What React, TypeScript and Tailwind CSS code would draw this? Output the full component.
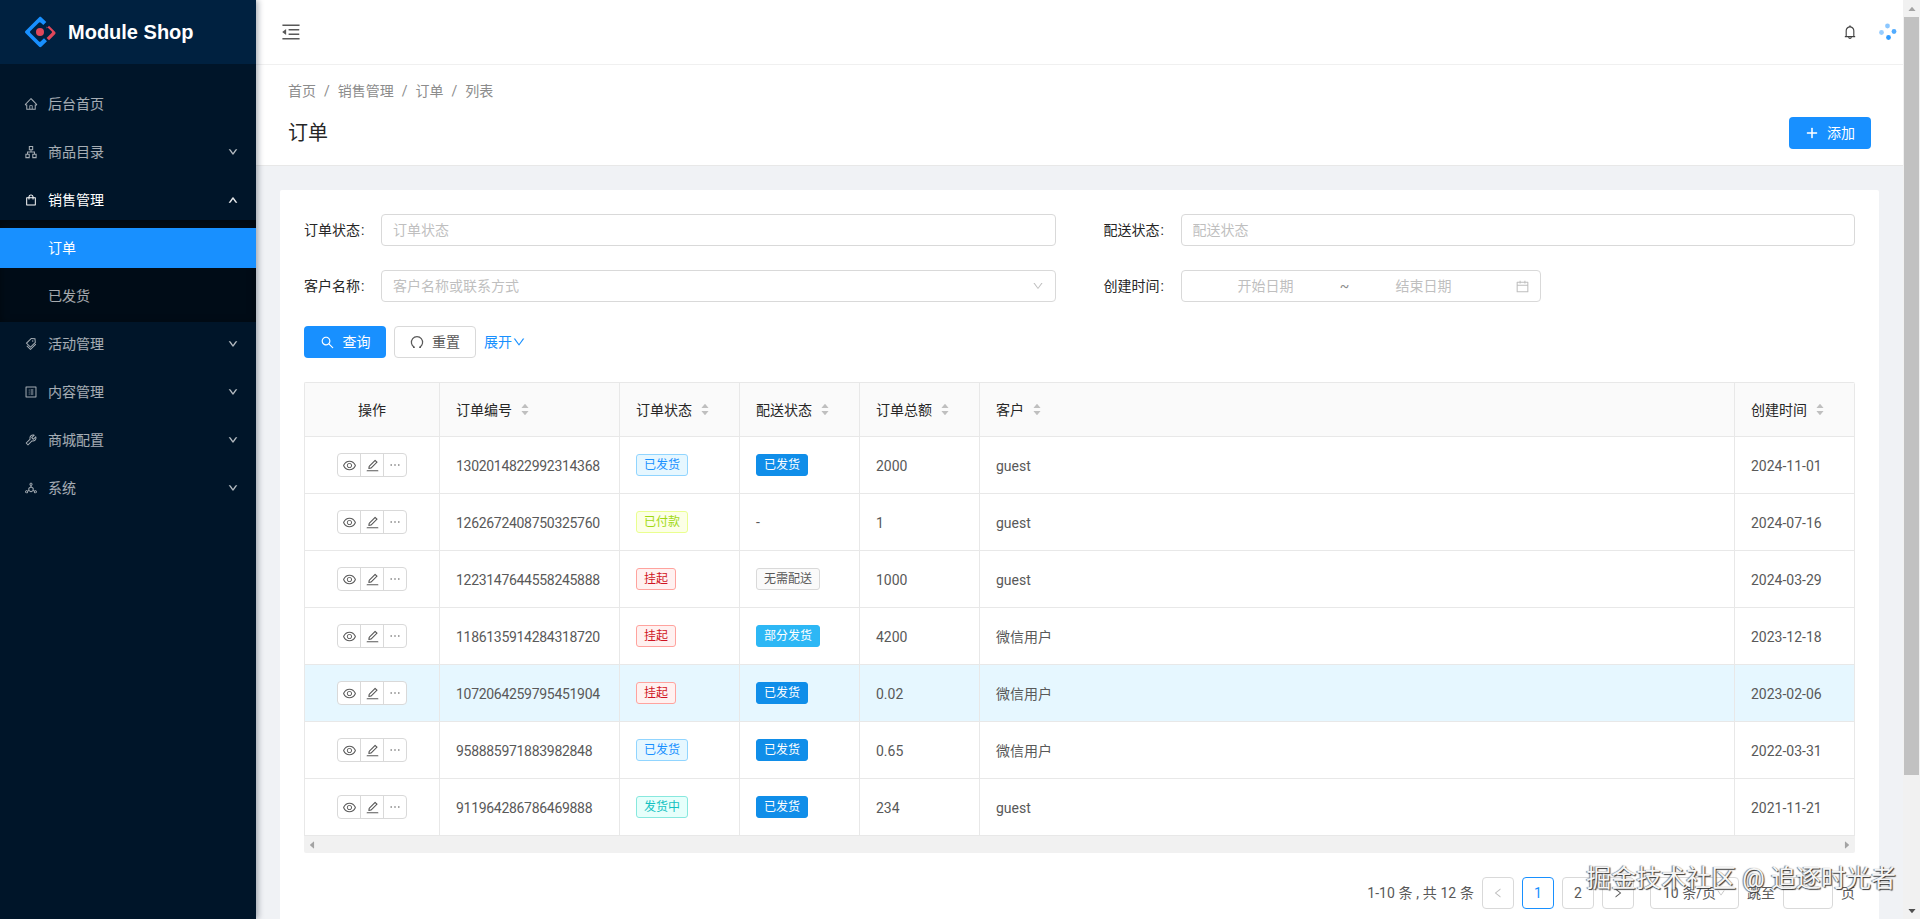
import type { ReactNode } from "react";
import {
  AiOutlineHome,
  AiOutlineApartment,
  AiOutlineShopping,
  AiOutlineTags,
  AiOutlineProfile,
  AiOutlineTool,
  AiOutlineDeploymentUnit,
  AiOutlineBell,
  AiOutlineEye,
  AiOutlineEdit,
  AiOutlineEllipsis,
  AiOutlineSearch,
  AiOutlineCalendar,
  AiOutlinePlus,
  AiOutlineDown,
  AiOutlineUp,
  AiOutlineLeft,
  AiOutlineRight,
  AiOutlineMenuFold,
  AiFillCaretUp,
  AiFillCaretDown,
} from "react-icons/ai";

const menuTop = [
  { icon: <AiOutlineHome size={16} />, label: "后台首页" },
  { icon: <AiOutlineApartment size={16} />, label: "商品目录", arrow: true },
];

const menuBottom = [
  { icon: <AiOutlineTags size={16} />, label: "活动管理" },
  { icon: <AiOutlineProfile size={16} />, label: "内容管理" },
  { icon: <AiOutlineTool size={16} />, label: "商城配置" },
  { icon: <AiOutlineDeploymentUnit size={16} />, label: "系统" },
];

const tagStyles = {
  sent: "bg-[#e6f7ff] border-[#91d5ff] text-[#1890ff]",
  paid: "bg-[#fcffe6] border-[#eaff8f] text-[#a0d911]",
  hold: "bg-[#fff1f0] border-[#ffa39e] text-[#cf1322]",
  going: "bg-[#e6fffb] border-[#87e8de] text-[#13c2c2]",
  none: "bg-[#fafafa] border-[#d9d9d9] text-[#595959]",
  blue: "bg-[#108ee9] border-[#108ee9] text-white",
  cyan: "bg-[#2db7f5] border-[#2db7f5] text-white",
};

type TagKind = keyof typeof tagStyles;

const orders: {
  id: string;
  status: [string, TagKind];
  ship: [string, TagKind] | null;
  total: string;
  customer: string;
  date: string;
  active?: boolean;
}[] = [
  { id: "1302014822992314368", status: ["已发货", "sent"], ship: ["已发货", "blue"], total: "2000", customer: "guest", date: "2024-11-01" },
  { id: "1262672408750325760", status: ["已付款", "paid"], ship: null, total: "1", customer: "guest", date: "2024-07-16" },
  { id: "1223147644558245888", status: ["挂起", "hold"], ship: ["无需配送", "none"], total: "1000", customer: "guest", date: "2024-03-29" },
  { id: "1186135914284318720", status: ["挂起", "hold"], ship: ["部分发货", "cyan"], total: "4200", customer: "微信用户", date: "2023-12-18" },
  { id: "1072064259795451904", status: ["挂起", "hold"], ship: ["已发货", "blue"], total: "0.02", customer: "微信用户", date: "2023-02-06", active: true },
  { id: "958885971883982848", status: ["已发货", "sent"], ship: ["已发货", "blue"], total: "0.65", customer: "微信用户", date: "2022-03-31" },
  { id: "911964286786469888", status: ["发货中", "going"], ship: ["已发货", "blue"], total: "234", customer: "guest", date: "2021-11-21" },
];

function Logo() {
  return (
    <svg width="32" height="32" viewBox="0 0 32 32" fill="none">
      <path d="M15.2 1.2 1.4 15a1.5 1.5 0 0 0 0 2.1l13.8 13.7c.6.6 1.5.6 2.1 0l5.7-5.6-3-3-3.2 3.1a1.4 1.4 0 0 1-2 0L6.4 17.1a1.4 1.4 0 0 1 0-2l8.4-8.4a1.4 1.4 0 0 1 2 0l2.5 2.4 3-3-5-4.9c-.6-.6-1.5-.6-2.1 0Z" fill="#1890ff" />
      <path d="m22.6 10.4 5.2 5.2a.8.8 0 0 1 0 1.1l-5.2 5.2 2.4 2.4 6-6c.7-.8.7-1.9 0-2.6l-6-6-2.4 2.7Z" fill="#e0475a" />
      <circle cx="16" cy="16" r="4" fill="#e0475a" />
    </svg>
  );
}

function MenuRow({ icon, label, arrow, open }: { icon: ReactNode; label: string; arrow?: boolean; open?: boolean }) {
  return (
    <div className={`flex h-10 items-center pl-6 pr-[18px] text-sm ${open ? "text-white" : "text-white/65"}`}>
      <span className="mr-2.5 flex w-3.5 justify-center">{icon}</span>
      <span className="flex-1">{label}</span>
      {arrow && (open ? <AiOutlineUp size={10} strokeWidth={70} /> : <AiOutlineDown size={10} strokeWidth={70} />)}
    </div>
  );
}

function Sidebar() {
  return (
    <aside className="z-10 flex h-full w-64 shrink-0 flex-col bg-[#001529] shadow-[2px_0_6px_rgba(0,21,41,0.35)]">
      <div className="flex h-16 shrink-0 items-center gap-3 bg-[#002140] pl-6">
        <Logo />
        <span className="font-['Liberation_Sans',sans-serif] text-xl font-bold text-white">Module Shop</span>
      </div>
      <nav className="flex flex-col gap-2 pt-5">
        {menuTop.map((m) => (
          <MenuRow key={m.label} {...m} />
        ))}
        <div>
          <MenuRow icon={<AiOutlineShopping size={16} />} label="销售管理" arrow open />
          <div className="-mb-[6px] flex flex-col gap-2 bg-[#000c17] pt-2 pb-[6px] shadow-[inset_0_2px_8px_rgba(0,0,0,0.45)]">
            <div className="flex h-10 items-center bg-[#1890ff] pl-12 text-sm text-white">订单</div>
            <div className="flex h-10 items-center pl-12 text-sm text-white/65">已发货</div>
          </div>
        </div>
        {menuBottom.map((m) => (
          <MenuRow key={m.label} {...m} arrow />
        ))}
      </nav>
    </aside>
  );
}

function Field({ label, children }: { label: string; children: ReactNode }) {
  return (
    <div className="flex h-8 items-center">
      <label className="w-[77px] shrink-0 text-sm text-[#262626]">
        {label}
        <span className="ml-[1px]">:</span>
      </label>
      {children}
    </div>
  );
}

function TextBox({ placeholder, icon }: { placeholder: string; icon?: ReactNode }) {
  return (
    <div className="flex h-8 flex-1 items-center rounded-[4px] border border-[#d9d9d9] bg-white pr-[11px]">
      <input
        placeholder={placeholder}
        className="h-full min-w-0 flex-1 bg-transparent pl-[11px] text-sm outline-none placeholder:text-[#bfbfbf]"
      />
      {icon}
    </div>
  );
}

function Tag({ text, kind }: { text: string; kind: TagKind }) {
  return (
    <span className={`inline-flex h-[22px] items-center rounded-[3px] border px-[7px] align-middle text-xs ${tagStyles[kind]}`}>
      {text}
    </span>
  );
}

function SortHead({ label }: { label: string }) {
  return (
    <div className="flex items-center gap-2">
      <span>{label}</span>
      <span className="flex flex-col text-[#bfbfbf]">
        <AiFillCaretUp size={10} className="-mb-[3px]" />
        <AiFillCaretDown size={10} />
      </span>
    </div>
  );
}

function RowActions() {
  return (
    <div className="mx-auto flex h-6 w-[70px] items-center overflow-hidden rounded-[4px] border border-[#d9d9d9] bg-white text-[#595959]">
      <span className="flex h-full flex-1 items-center justify-center border-r border-[#d9d9d9]">
        <AiOutlineEye size={15} />
      </span>
      <span className="flex h-full flex-1 items-center justify-center border-r border-[#d9d9d9]">
        <AiOutlineEdit size={15} />
      </span>
      <span className="flex h-full flex-1 items-center justify-center">
        <AiOutlineEllipsis size={14} />
      </span>
    </div>
  );
}

const thClass = "border-r border-b border-[#e8e8e8] px-4 text-sm font-normal text-[#262626]";
const tdClass = "border-r border-b border-[#e8e8e8] px-4 text-sm text-[#595959]";

function OrderTable() {
  return (
    <div className="mt-6 overflow-hidden rounded-t-[2px] border-t border-l border-[#e8e8e8]">
      <table className="w-full table-fixed border-separate border-spacing-0">
        <colgroup>
          <col className="w-[135px]" />
          <col className="w-[180px]" />
          <col className="w-[120px]" />
          <col className="w-[120px]" />
          <col className="w-[120px]" />
          <col />
          <col className="w-[120px]" />
        </colgroup>
        <thead>
          <tr className="h-[54px] bg-[#fafafa]">
            <th className={`${thClass} text-center`}>操作</th>
            <th className={`${thClass} text-left`}><SortHead label="订单编号" /></th>
            <th className={`${thClass} text-left`}><SortHead label="订单状态" /></th>
            <th className={`${thClass} text-left`}><SortHead label="配送状态" /></th>
            <th className={`${thClass} text-left`}><SortHead label="订单总额" /></th>
            <th className={`${thClass} text-left`}><SortHead label="客户" /></th>
            <th className={`${thClass} text-left`}><SortHead label="创建时间" /></th>
          </tr>
        </thead>
        <tbody>
          {orders.map((o) => (
            <tr key={o.id} className={`h-[57px] ${o.active ? "bg-[#e6f7ff]" : "bg-white"}`}>
              <td className={tdClass}><RowActions /></td>
              <td className={`${tdClass} pt-[2px] tracking-[-0.3px]`}>{o.id}</td>
              <td className={tdClass}><Tag text={o.status[0]} kind={o.status[1]} /></td>
              <td className={tdClass}>{o.ship ? <Tag text={o.ship[0]} kind={o.ship[1]} /> : "-"}</td>
              <td className={`${tdClass} pt-[2px]`}>{o.total}</td>
              <td className={`${tdClass} pt-[2px]`}>{o.customer}</td>
              <td className={`${tdClass} pt-[2px]`}>{o.date}</td>
            </tr>
          ))}
        </tbody>
      </table>
    </div>
  );
}

function PageBox({ children, active, muted }: { children: ReactNode; active?: boolean; muted?: boolean }) {
  return (
    <span
      className={`flex h-8 w-8 items-center justify-center rounded-[4px] border bg-white text-sm ${
        active ? "border-[#1890ff] text-[#1890ff]" : "border-[#d9d9d9]"
      } ${muted ? "text-[#bfbfbf]" : ""}`}
    >
      {children}
    </span>
  );
}

function Pagination() {
  return (
    <div className="mt-6 flex items-center justify-end text-sm text-[#595959]">
      <span className="mr-2 tracking-[0.1px]">1-10 条 , 共 12 条</span>
      <PageBox muted><AiOutlineLeft size={12} /></PageBox>
      <span className="ml-2"><PageBox active>1</PageBox></span>
      <span className="ml-2"><PageBox>2</PageBox></span>
      <span className="ml-2"><PageBox><AiOutlineRight size={12} /></PageBox></span>
      <span className="ml-4 flex h-8 w-[89px] items-center justify-between rounded-[4px] border border-[#d9d9d9] bg-white px-3">
        10 条/页
        <AiOutlineDown size={10} className="text-[#bfbfbf]" />
      </span>
      <span className="ml-2">跳至</span>
      <span className="mx-2 h-8 w-[50px] rounded-[4px] border border-[#d9d9d9] bg-white" />
      <span>页</span>
    </div>
  );
}

function Scrollbar() {
  return (
    <div className="flex h-full w-[17px] shrink-0 flex-col items-center bg-[#f1f1f1]">
      <div className="flex h-[17px] items-center justify-center">
        <AiFillCaretUp size={10} className="text-[#a3a3a3]" />
      </div>
      <div className="h-[758px] w-[15px] bg-[#c1c1c1]" />
      <div className="flex-1" />
      <div className="flex h-[17px] items-center justify-center">
        <AiFillCaretDown size={10} className="text-[#505050]" />
      </div>
    </div>
  );
}

export default function App() {
  return (
    <div className="relative flex h-[919px] overflow-hidden bg-[#f0f2f5] font-[Roboto,'Noto_Sans_CJK_SC',sans-serif]">
      <Sidebar />
      <main className="flex min-w-0 flex-1 flex-col">
        <header className="flex h-[65px] shrink-0 items-center border-b border-[#f0f0f0] bg-white pr-[5px] pl-6">
          <AiOutlineMenuFold size={22} className="text-[#595959]" />
          <div className="flex-1" />
          <AiOutlineBell size={16} className="mr-5 text-[#404040]" />
          <svg width="20" height="20" viewBox="0 0 20 20">
            <circle cx="9.5" cy="4" r="2.4" fill="#1890ff" opacity="0.5" />
            <circle cx="16" cy="9.5" r="2.4" fill="#1890ff" opacity="0.75" />
            <circle cx="10.5" cy="15.5" r="2.4" fill="#1890ff" opacity="0.9" />
            <circle cx="3.5" cy="10.5" r="2.4" fill="#1890ff" opacity="0.45" />
          </svg>
        </header>

        <section className="h-[101px] shrink-0 border-b border-[#e8e8e8] bg-white px-8 pt-4">
          <div className="flex gap-2 text-sm text-[#8c8c8c]">
            <span>首页</span><span>/</span><span>销售管理</span><span>/</span><span>订单</span><span>/</span><span>列表</span>
          </div>
          <div className="mt-4 flex items-start justify-between">
            <h1 className="mt-[2px] text-xl leading-7 text-[#262626]">订单</h1>
            <button className="flex h-8 w-[82px] items-center justify-center gap-2 rounded-[4px] bg-[#1890ff] text-sm text-white">
              <AiOutlinePlus size={14} strokeWidth={40} />
              添加
            </button>
          </div>
        </section>

        <div className="flex-1 px-6 pt-6">
          <div className="rounded-[2px] bg-white p-6">
            <div className="grid grid-cols-2 gap-x-12 gap-y-6">
              <Field label="订单状态"><TextBox placeholder="订单状态" /></Field>
              <Field label="配送状态"><TextBox placeholder="配送状态" /></Field>
              <Field label="客户名称">
                <TextBox placeholder="客户名称或联系方式" icon={<AiOutlineDown size={12} className="text-[#bfbfbf]" />} />
              </Field>
              <Field label="创建时间">
                <div className="flex h-8 w-[360px] items-center rounded-[4px] border border-[#d9d9d9] bg-white px-[10px] text-sm text-[#bfbfbf]">
                  <span className="w-[148px] text-center">开始日期</span>
                  <span className="w-[10px] text-center text-[#8c8c8c]">~</span>
                  <span className="w-[148px] text-center">结束日期</span>
                  <span className="flex flex-1 justify-end"><AiOutlineCalendar size={15} /></span>
                </div>
              </Field>
            </div>

            <div className="mt-6 flex items-center gap-2 text-sm">
              <button className="flex h-8 w-[82px] items-center justify-center gap-2 rounded-[4px] bg-[#1890ff] text-white">
                <AiOutlineSearch size={15} />
                查询
              </button>
              <button className="flex h-8 w-[82px] items-center justify-center gap-2 rounded-[4px] border border-[#d9d9d9] bg-white text-[#595959]">
                <svg width="14" height="14" viewBox="0 0 14 14" fill="none" stroke="currentColor" strokeWidth="1.2">
                  <path d="M4.3 12.2A5.6 5.6 0 1 1 9.7 12.2" />
                  <path d="M3 12.4h1.8M9.2 12.4H11" />
                </svg>
                重置
              </button>
              <span className="flex items-center text-[#1890ff]">
                展开
                <AiOutlineDown size={14} />
              </span>
            </div>

            <OrderTable />

            <div className="flex h-[17px] items-center justify-between rounded-b-[2px] bg-[#f1f1f1] px-[3px] text-[#a3a3a3]">
              <AiFillCaretUp size={10} className="-rotate-90" />
              <AiFillCaretUp size={10} className="rotate-90" />
            </div>

            <Pagination />
          </div>
        </div>
      </main>
      <Scrollbar />
      <div className="absolute right-[24px] bottom-[24px] text-[25px] leading-8 text-[#f5f5f5] [text-shadow:1px_1px_1px_#333,-1px_0_1px_#777]">
        掘金技术社区 @ 追逐时光者
      </div>
    </div>
  );
}
